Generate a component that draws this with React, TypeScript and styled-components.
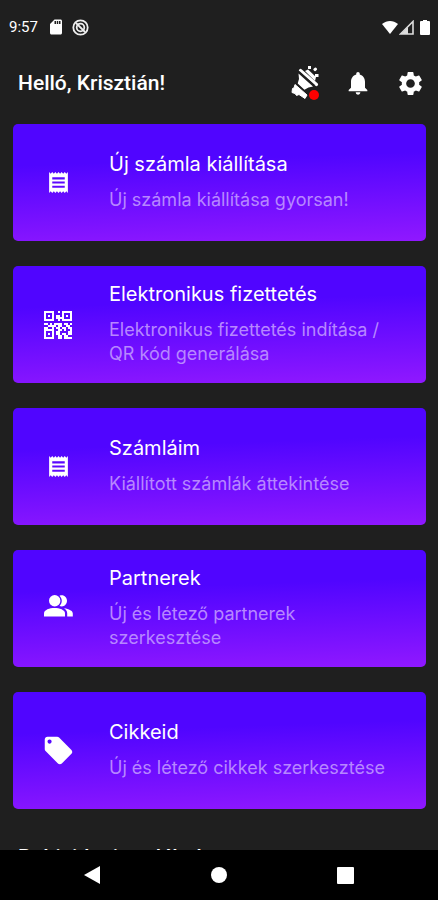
import React, { type ReactNode } from "react";
import styled, { createGlobalStyle } from "styled-components";
import {
  MdReceipt, MdLocalOffer, MdNotifications, MdSettings, MdSdCard,
} from "react-icons/md";

const GlobalStyle = createGlobalStyle`
  *, *::before, *::after { box-sizing: border-box; }
  body { margin: 0; background: #1f1f1f; color: #fff; font-family: Roboto, "Liberation Sans", sans-serif; }
  button { font: inherit; color: inherit; border: 0; background: none; padding: 0; cursor: pointer; }
`;

const Screen = styled.div`
  height: 100vh;
  display: flex;
  flex-direction: column;
  overflow: hidden;
`;

const StatusBar = styled.div`
  flex: none;
  height: 54px;
  padding: 0 8px 0 9px;
  display: flex;
  align-items: center;
  justify-content: space-between;
  font-size: 15px;
`;

const StatusGroup = styled.div<{ $gap: number }>`
  display: flex;
  align-items: center;
  gap: ${({ $gap }) => $gap}px;
`;

const Clock = styled.span`
  margin-right: 2px;
`;

const Header = styled.header`
  flex: none;
  height: 58px;
  padding: 0 13px 0 18px;
  display: flex;
  align-items: center;
  justify-content: space-between;
`;

const Heading = styled.h1`
  margin: 0;
  font-size: 21px;
  line-height: 28px;
  font-weight: 500;
  white-space: nowrap;
`;

const Actions = styled.div`
  display: flex;
  align-items: center;
  gap: 24px;
`;

const IconButton = styled.button`
  position: relative;
  display: grid;
  place-items: center;
  width: 29px;
  height: 34px;
`;

const Dot = styled.span`
  position: absolute;
  right: 0;
  bottom: 0;
  width: 10px;
  height: 10px;
  border-radius: 50%;
  background: #f00;
`;

const Content = styled.main`
  flex: 1;
  min-height: 0;
  overflow-y: auto;
  scrollbar-width: none;
  padding: 12px 12px 24px 13px;
`;

const CardList = styled.div`
  display: grid;
  gap: 25px;
`;

const Card = styled.button`
  width: 100%;
  min-height: 117px;
  padding: 0 36px 0 20px;
  display: grid;
  grid-template-columns: 50px 1fr;
  column-gap: 26px;
  align-items: center;
  text-align: left;
  border-radius: 5px;
  background: linear-gradient(178deg, #5005ff 0%, #5005ff 32%, #9018ff 100%);
  font-family: Inter, "Open Sans", sans-serif;
`;

const CardIcon = styled.span`
  display: grid;
  place-items: center;
`;

const CardText = styled.span`
  display: grid;
  gap: 10px;
  padding-bottom: 4px;
`;

const CardTitle = styled.span`
  font-size: 20px;
  line-height: 28px;
`;

const CardNote = styled.span`
  font-size: 18px;
  line-height: 24px;
  color: #b787ff;
`;

const SectionTitle = styled.h2`
  margin: 34px 0 0 5px;
  font-size: 21px;
  line-height: 28px;
  font-weight: 500;
`;

const NavBar = styled.nav`
  flex: none;
  height: 50px;
  background: #000;
  display: flex;
  align-items: center;
  justify-content: space-around;
  padding: 0 29px;
`;

const NavButton = styled.button`
  width: 48px;
  height: 48px;
  display: grid;
  place-items: center;
`;

const PartyPopper = () => (
  <svg width="30" height="34" viewBox="0 0 30 34" fill="#fff" aria-hidden="true">
    <path d="M10.500 4.500L26.500 18.500" stroke="#fff" strokeWidth="3.2" strokeLinecap="round" />
    <path d="M15 5l3-1.500 8 7.500-1 4z" />
    <path d="M8.500 7.500L23 20.500l-4.500 1-4.500 2.500-6.500-6 1.500-5z" />
    <path d="M5 18.500L17 29l-2 3.500-6-4-2.500 1-1.500-2-3-1 .5-4 1.500-.5z" stroke="#fff" strokeLinejoin="round" />
    <path d="M9 5.500L24.500 19.500M5 16l12 11" fill="none" stroke="#1f1f1f" strokeWidth="1.3" />
    <rect x="18" y="0" width="3" height="3" />
    <rect x="23.500" y="2" width="3.500" height="3" rx="1" transform="rotate(-40 25 3.500)" />
    <rect x="25" y="8" width="3.500" height="3" />
  </svg>
);

const People = () => (
  <svg width="29" height="29" viewBox="0 0 29 29" fill="#fff" aria-hidden="true">
    <circle cx="10.700" cy="6.800" r="5.700" />
    <path d="M15.500 1.700C19.500 0 23 3 23 6.800s-3.500 6.800-7.500 5.100c3-3 3-7.200 0-10.200z" />
    <path d="M0 22.500v-3.200c0-3.400 5.500-5.300 10.500-5.300S21 15.900 21 19.300v3.200z" />
    <path d="M20 14.300c5 .8 8.800 2.500 8.800 5.200v3h-5.600v-3.200c0-2-1.200-3.700-3.200-5z" />
  </svg>
);

const qrRows = [
  "11111001011111",
  "10001000010001",
  "10101011010101",
  "10001011110001",
  "11111001011111",
  "00000000000000",
  "11010111101101",
  "00111101100110",
  "11001011011011",
  "11111001101001",
  "10001011000011",
  "10101011011011",
  "10001001101100",
  "11111001101111",
];

const QrCode = () => (
  <svg width="28" height="28" viewBox="0 0 14 14" fill="#fff" shapeRendering="crispEdges" aria-hidden="true">
    {qrRows.flatMap((row, y) =>
      [...row].map((bit, x) => bit === "1" && <rect key={`${x}-${y}`} x={x} y={y} width="1" height="1" />),
    )}
  </svg>
);

const DataSaver = () => (
  <svg width="17" height="17" viewBox="0 0 17 17" fill="none" stroke="#eee" aria-hidden="true">
    <circle cx="8.5" cy="8.5" r="7.2" strokeWidth="1.8" />
    <circle cx="8.5" cy="8.5" r="3.8" strokeWidth="1.8" />
    <path d="M4 4l9 9" strokeWidth="1.8" />
  </svg>
);

const Wifi = () => (
  <svg width="16" height="15" viewBox="0 0 16 15" fill="#fff" aria-hidden="true">
    <path d="M0 4C5 0 11 0 16 4L8 14z" />
  </svg>
);

const Signal = () => (
  <svg width="15" height="15" viewBox="0 0 15 15" aria-hidden="true">
    <path d="M1.500 14L14 1.500V14z" fill="none" stroke="#ddd" strokeWidth="1.6" />
    <path d="M2 14l7-7v7z" fill="#ddd" />
  </svg>
);

const Battery = () => (
  <svg width="10" height="15" viewBox="0 0 10 15" fill="#fff" aria-hidden="true">
    <path d="M3 0h4v1h2q1 0 1 1v12q0 1-1 1H1q-1 0-1-1V2q0-1 1-1h2z" />
  </svg>
);

type Item = { title: string; note: string; icon: ReactNode };

const items: Item[] = [
  { title: "Új számla kiállítása", note: "Új számla kiállítása gyorsan!", icon: <MdReceipt size={25} /> },
  { title: "Elektronikus fizettetés", note: "Elektronikus fizettetés indítása / QR kód generálása", icon: <QrCode /> },
  { title: "Számláim", note: "Kiállított számlák áttekintése", icon: <MdReceipt size={25} /> },
  { title: "Partnerek", note: "Új és létező partnerek szerkesztése", icon: <People /> },
  { title: "Cikkeid", note: "Új és létező cikkek szerkesztése", icon: <MdLocalOffer size={33} /> },
];

export default function App() {
  return (
    <Screen>
      <GlobalStyle />
      <StatusBar>
        <StatusGroup $gap={7}>
          <Clock>9:57</Clock>
          <MdSdCard size={18} />
          <DataSaver />
        </StatusGroup>
        <StatusGroup $gap={6}>
          <StatusGroup $gap={1}>
            <Wifi />
            <Signal />
          </StatusGroup>
          <Battery />
        </StatusGroup>
      </StatusBar>
      <Header>
        <Heading>Helló, Krisztián!</Heading>
        <Actions>
          <IconButton type="button" aria-label="Újdonságok"><PartyPopper /><Dot /></IconButton>
          <IconButton type="button" aria-label="Értesítések"><MdNotifications size={28} /></IconButton>
          <IconButton type="button" aria-label="Beállítások"><MdSettings size={29} /></IconButton>
        </Actions>
      </Header>
      <Content>
        <CardList>
          {items.map((item) => (
            <Card key={item.title} type="button">
              <CardIcon>{item.icon}</CardIcon>
              <CardText>
                <CardTitle>{item.title}</CardTitle>
                <CardNote>{item.note}</CardNote>
              </CardText>
            </Card>
          ))}
        </CardList>
        <SectionTitle>Boltjaidat itt találod</SectionTitle>
      </Content>
      <NavBar>
        <NavButton type="button" aria-label="Vissza">
          <svg width="16" height="18" viewBox="0 0 16 18" fill="#fff"><path d="M0 9L16 0v18z" /></svg>
        </NavButton>
        <NavButton type="button" aria-label="Kezdőképernyő">
          <svg width="16" height="16" viewBox="0 0 16 16" fill="#fff"><circle cx="8" cy="8" r="8" /></svg>
        </NavButton>
        <NavButton type="button" aria-label="Áttekintés">
          <svg width="17" height="17" viewBox="0 0 17 17" fill="#fff"><rect width="17" height="17" rx="1" /></svg>
        </NavButton>
      </NavBar>
    </Screen>
  );
}
